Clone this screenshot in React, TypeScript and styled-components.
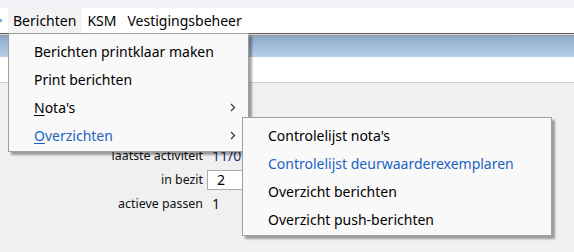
import styled, { createGlobalStyle } from 'styled-components';

const GlobalStyle = createGlobalStyle`
    html, body {
        margin: 0;
        padding: 0;
        background: #f0f0f0;
    }
    body {
        font-family: "Segoe UI", "Noto Sans", sans-serif;
        font-size: 14px;
        color: #000;
    }
`;

const Screen = styled.div`
    position: relative;
    width: 574px;
    height: 252px;
    overflow: hidden;
    background: #f0f0f0;
`;

const TopStrip = styled.div`
    height: 8px;
    background: #f3f0f7;
`;

const MenuBar = styled.div`
    display: flex;
    align-items: stretch;
    height: 25px;
    background: #fff;
`;

const EdgeMark = styled.span`
    width: 2px;
    height: 3px;
    margin: 11px 6px 0 0;
    background: #6aaee8;
`;

const BarItem = styled.div<{ $active?: boolean }>`
    display: flex;
    align-items: center;
    padding: 0 6px 0 5px;
    background: ${p => (p.$active ? '#f3f3f3' : 'transparent')};
    line-height: 1;
`;

const Divider = styled.div`
    height: 1px;
    border-top: 1px solid #5e5e5e;
    border-bottom: 1px solid #9a9a9a;
    background: #d8d8d8;
`;

const TitleBand = styled.div`
    height: 21px;
    background: linear-gradient(#8eaac8, #b6d0ea);
`;

const WhiteArea = styled.div`
    height: 25px;
    background: #fff;
    border-bottom: 1px solid #cfcfcf;
`;

const Form = styled.div`
    display: grid;
    grid-template-columns: 203px 35px;
    column-gap: 4px;
    padding-top: 61px;
    font-size: 12.4px;
`;

const Label = styled.div`
    text-align: right;
    height: 24px;
    line-height: 24px;
    color: #111;
`;

const Value = styled.div<{ $navy?: boolean }>`
    height: 24px;
    line-height: 24px;
    padding-left: 5px;
    overflow: hidden;
    white-space: nowrap;
    font-size: 14px;
    color: ${p => (p.$navy ? '#15306e' : '#111')};
`;

const InputCell = styled.div`
    height: 24px;
    overflow: hidden;
`;

const InputBox = styled.div`
    margin-top: 2px;
    width: 80px;
    height: 18px;
    line-height: 18px;
    padding-left: 9px;
    font-size: 14px;
    background: #fff;
    border: 1px solid #acacac;
`;

const Menu = styled.div<{ $left: number; $top: number; $width: number }>`
    position: absolute;
    left: ${p => p.$left}px;
    top: ${p => p.$top}px;
    width: ${p => p.$width}px;
    padding: 3px 0 2px;
    background: #f9f9f9;
    border: 1px solid #a0a0a0;
    box-shadow: 3px 3px 2px rgba(0, 0, 0, 0.35);
    box-sizing: border-box;
`;

const MenuItem = styled.div<{ $blue?: boolean }>`
    display: flex;
    align-items: center;
    justify-content: space-between;
    height: 28px;
    padding: 0 12px 0 25px;
    color: ${p => (p.$blue ? '#1b63c2' : '#000')};
    white-space: nowrap;
`;

const Key = styled.span`
    text-decoration: underline;
    text-underline-offset: 2px;
`;

const Chevron = () => (
    <svg width="6" height="9" viewBox="0 0 6 9">
        <path d="M1 1 L4.5 4.5 L1 8" fill="none" stroke="#333" strokeWidth="1.2" />
    </svg>
);

const App = () => {
    const mainItems = [
        { label: 'Berichten printklaar maken' },
        { label: 'Print berichten' },
        { key: 'N', label: "ota's", sub: true },
        { key: 'O', label: 'verzichten', sub: true, blue: true },
    ];
    const subItems = [
        { label: "Controlelijst nota's" },
        { label: 'Controlelijst deurwaarderexemplaren', blue: true },
        { label: 'Overzicht berichten' },
        { label: 'Overzicht push-berichten' },
    ];

    return (
        <Screen>
            <GlobalStyle />
            <TopStrip />
            <MenuBar>
                <EdgeMark />
                <BarItem $active>Berichten</BarItem>
                <BarItem>KSM</BarItem>
                <BarItem>Vestigingsbeheer</BarItem>
            </MenuBar>
            <Divider />
            <TitleBand />
            <WhiteArea />
            <Form>
                <Label>laatste activiteit</Label>
                <Value $navy>11/05/2023</Value>
                <Label>in bezit</Label>
                <InputCell><InputBox>2</InputBox></InputCell>
                <Label>actieve passen</Label>
                <Value>1</Value>
            </Form>

            <Menu $left={8} $top={33} $width={241}>
                {mainItems.map((item, i) => (
                    <MenuItem key={i} $blue={item.blue}>
                        <span>
                            {item.key && <Key>{item.key}</Key>}
                            {item.label}
                        </span>
                        {item.sub && <Chevron />}
                    </MenuItem>
                ))}
            </Menu>

            <Menu $left={242} $top={117} $width={310}>
                {subItems.map((item, i) => (
                    <MenuItem key={i} $blue={item.blue}>
                        <span>{item.label}</span>
                    </MenuItem>
                ))}
            </Menu>
        </Screen>
    );
};

export default App;
